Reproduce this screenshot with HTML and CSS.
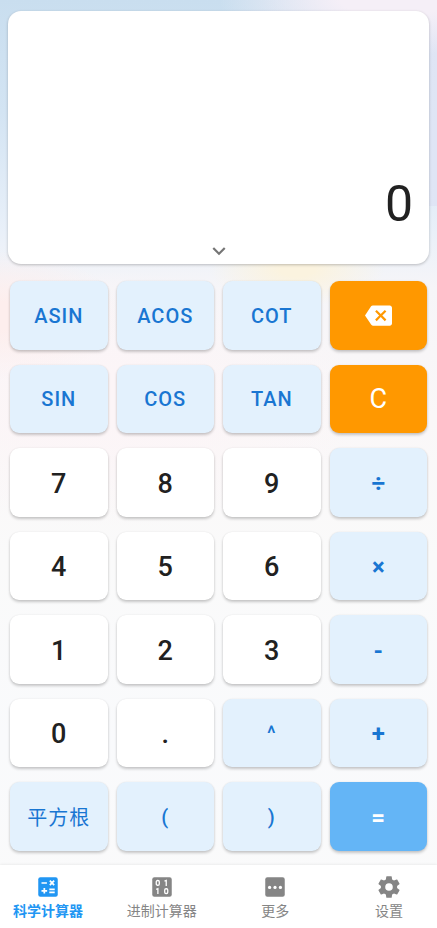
FILE: index.html
```html
<!DOCTYPE html>
<html lang="zh-CN">
<head>
<meta charset="utf-8">
<meta name="viewport" content="width=device-width, initial-scale=1">
<title>科学计算器</title>
<link rel="stylesheet" href="styles.css">
</head>
<body>
<main class="calculator">
  <section class="screen">
    <output class="result">0</output>
    <button class="expand" type="button" aria-label="展开">
      <svg class="icon-chevron" viewBox="0 0 24 24"><path d="M7.41 8.59 12 13.17l4.59-4.58L18 10l-6 6-6-6z"/></svg>
    </button>
  </section>
  <section class="keypad">
    <button class="key function" type="button">ASIN</button>
    <button class="key function" type="button">ACOS</button>
    <button class="key function" type="button">COT</button>
    <button class="key action" type="button" aria-label="退格">
      <svg class="icon-backspace" viewBox="0 0 24 24"><path d="M22 3H7c-.69 0-1.23.35-1.59.88L0 12l5.41 8.11c.36.53.9.89 1.59.89h15c1.1 0 2-.9 2-2V5c0-1.1-.9-2-2-2zm-3 12.59L17.59 17 14 13.41 10.41 17 9 15.59 12.59 12 9 8.41 10.41 7 14 10.59 17.59 7 19 8.41 15.41 12 19 15.59z"/></svg>
    </button>
    <button class="key function" type="button">SIN</button>
    <button class="key function" type="button">COS</button>
    <button class="key function" type="button">TAN</button>
    <button class="key action" type="button">C</button>
    <button class="key digit" type="button">7</button>
    <button class="key digit" type="button">8</button>
    <button class="key digit" type="button">9</button>
    <button class="key operator" type="button">÷</button>
    <button class="key digit" type="button">4</button>
    <button class="key digit" type="button">5</button>
    <button class="key digit" type="button">6</button>
    <button class="key operator" type="button">×</button>
    <button class="key digit" type="button">1</button>
    <button class="key digit" type="button">2</button>
    <button class="key digit" type="button">3</button>
    <button class="key operator" type="button">-</button>
    <button class="key digit" type="button">0</button>
    <button class="key digit" type="button">.</button>
    <button class="key function" type="button">^</button>
    <button class="key operator" type="button">+</button>
    <button class="key function root" type="button">平方根</button>
    <button class="key function" type="button">(</button>
    <button class="key function" type="button">)</button>
    <button class="key equals" type="button">=</button>
  </section>
</main>
<nav class="tabs">
  <a class="tab active" href="#scientific" aria-current="page">
    <svg class="icon-tab" viewBox="0 0 24 24"><rect x="3" y="3" width="18" height="18" rx="2"/><path class="mark" d="M6 8.3h5M13.700 6.200l4 4M17.700 6.200l-4 4M6 15.500h5.200M8.600 12.900v5.200M13.200 14.200h5M13.200 16.900h5"/></svg>
    <span>科学计算器</span>
  </a>
  <a class="tab" href="#radix">
    <svg class="icon-tab" viewBox="0 0 24 24"><rect x="3" y="3" width="18" height="18" rx="2"/><g class="mark thin"><rect x="6.700" y="6" width="2.800" height="4.400" rx="1.200"/><path d="M14.300 6.600l1.600-.6v5"/><path d="M6.600 14.100l1.600-.6v5"/><rect x="14.500" y="13.600" width="2.800" height="4.400" rx="1.200"/></g></svg>
    <span>进制计算器</span>
  </a>
  <a class="tab" href="#more">
    <svg class="icon-tab" viewBox="0 0 24 24"><rect x="3" y="3" width="18" height="18" rx="2"/><g class="dots"><circle cx="7" cy="12.400" r="1.500"/><circle cx="12" cy="12.400" r="1.500"/><circle cx="17" cy="12.400" r="1.500"/></g></svg>
    <span>更多</span>
  </a>
  <a class="tab" href="#settings">
    <svg class="icon-tab" viewBox="0 0 24 24"><path d="M12 15.500A3.500 3.500 0 0 1 8.500 12 3.500 3.500 0 0 1 12 8.500a3.500 3.500 0 0 1 3.500 3.500 3.500 3.500 0 0 1-3.500 3.500m7.430-2.530c.04-.32.07-.64.07-.97s-.03-.66-.07-1l2.110-1.630c.19-.15.24-.42.12-.64l-2-3.460c-.12-.22-.39-.31-.61-.22l-2.490 1c-.52-.39-1.060-.73-1.690-.98l-.37-2.650A.506.506 0 0 0 14 2h-4c-.25 0-.46.18-.5.42l-.37 2.650c-.63.25-1.170.59-1.690.98l-2.490-1c-.22-.09-.49 0-.61.22l-2 3.460c-.13.22-.07.49.12.64L4.570 11c-.04.34-.07.67-.07 1s.03.65.07.97l-2.110 1.660c-.19.15-.25.42-.12.64l2 3.460c.12.22.39.300.610.220l2.490-1.010c.52.400 1.060.740 1.690.990l.370 2.650c.040.240.250.420.500.420h4c.250 0 .460-.180.500-.420l.370-2.650c.630-.260 1.170-.590 1.690-.990l2.490 1.010c.220.080.490 0 .610-.220l2-3.460c.120-.220.070-.490-.120-.640z"/></svg>
    <span>设置</span>
  </a>
</nav>
</body>
</html>
```
FILE: styles.css
```css
* {
  box-sizing: border-box;
}

body {
  margin: 0;
  min-height: 100vh;
  display: flex;
  flex-direction: column;
  color: #212121;
  font-family: Roboto, "Noto Sans CJK SC", sans-serif;
  background:
    radial-gradient(ellipse 40% 6% at 90% 0, #f5eff7 30%, transparent),
    radial-gradient(ellipse 20% 4% at 68% 29%, #fbf3df 20%, transparent),
    radial-gradient(ellipse 28% 7% at 0 34%, #fdeeed 20%, transparent),
    radial-gradient(ellipse 60% 14% at 25% 43%, #fcf5f7 20%, transparent),
    linear-gradient(90deg, transparent 60%, #dfe5f5 100%) 0 0 / 100% 206px no-repeat,
    linear-gradient(180deg, #c9deef 0, #d3e4f3 12%, #e9f0f9 25%, #f6f5f8 31%, #faf7f8 45%, #fafafa 60%, #f9fafc 80%, #fafafa 100%);
}

button {
  margin: 0;
  padding: 0;
  border: 0;
  color: inherit;
  font: inherit;
  cursor: pointer;
}

svg {
  display: block;
  fill: currentColor;
}

.calculator {
  flex: 1;
  display: flex;
  flex-direction: column;
}

.screen {
  flex: 4 1 0;
  margin: 11px 8px 0;
  display: flex;
  flex-direction: column;
  justify-content: flex-end;
  background: #fff;
  border-radius: 13px;
  box-shadow: 0 1px 3px rgba(0, 0, 0, 0.24);
}

.result {
  padding: 0 16px;
  font-size: 50px;
  line-height: 60px;
  text-align: right;
}

.expand {
  align-self: center;
  padding: 4px 16px 0;
  color: #757575;
  background: none;
}

.icon-chevron {
  width: 26px;
  height: 26px;
}

.keypad {
  flex: 9 1 0;
  padding: 17px 10px 14px;
  display: grid;
  grid-template-columns: repeat(4, 1fr);
  grid-auto-rows: 1fr;
  gap: 15px 9px;
}

.key {
  display: flex;
  align-items: center;
  justify-content: center;
  font-size: 27px;
  line-height: 32px;
  border-radius: 9px;
  box-shadow: 0 2px 3px rgba(0, 0, 0, 0.2), 0 0 2px rgba(0, 0, 0, 0.08);
}

.digit,
.operator,
.equals {
  padding-top: 2px;
}

.digit {
  font-weight: 500;
  background: #fff;
}

.function,
.operator {
  color: #1976d2;
  background: #e3f1fd;
}

.function {
  font-size: 20px;
  font-weight: 500;
  letter-spacing: 1px;
}

.root {
  padding-top: 2px;
  font-weight: 400;
}

.action {
  color: #fff;
  background: #ff9800;
}

.equals {
  color: #fff;
  background: #64b5f6;
}

.operator,
.equals {
  font-size: 24px;
  font-weight: 700;
}

.icon-backspace {
  width: 27px;
  height: 27px;
}

.tabs {
  height: 63px;
  padding: 0 8px;
  display: flex;
  justify-content: space-between;
  background: #fff;
  box-shadow: 0 0 3px rgba(0, 0, 0, 0.1);
}

.tab {
  min-width: 80px;
  display: flex;
  flex-direction: column;
  align-items: center;
  padding-top: 9px;
  color: #858585;
  font-size: 14px;
  line-height: 22px;
  text-decoration: none;
  white-space: nowrap;
}

.active {
  color: #2196f3;
  font-weight: 700;
}

.icon-tab {
  width: 26px;
  height: 26px;
}

.mark {
  fill: none;
  stroke: #fff;
  stroke-width: 1.6;
}

.thin {
  stroke-width: 1.2;
}

.dots {
  fill: #fff;
}
```
